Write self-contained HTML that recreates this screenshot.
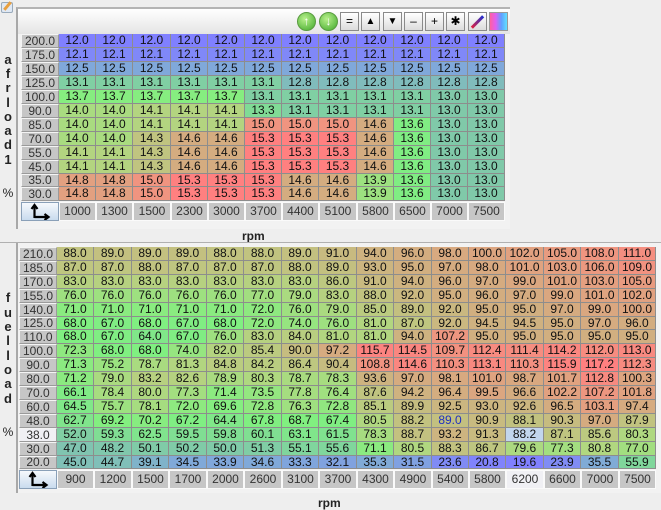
<!DOCTYPE html>
<html><head><meta charset="utf-8"><style>
body{margin:0;width:661px;height:509px;background:#eeeeee;position:relative;overflow:hidden;font-family:"Liberation Sans",sans-serif;}
.a{position:absolute;box-sizing:border-box;}
.c{position:absolute;box-sizing:border-box;font-size:12px;text-align:center;color:#111;border-right:1px solid #8d8d8d;border-bottom:1px solid #8d8d8d;white-space:nowrap;}
.h{position:absolute;box-sizing:border-box;font-size:12px;text-align:center;color:#333;background:#c6c6c6;border:1px solid #f4f4f4;border-right-color:#9a9a9a;border-bottom-color:#9a9a9a;}
.x{position:absolute;box-sizing:border-box;font-size:12px;text-align:center;color:#333;background:#c6c6c6;border:1px solid #fafafa;line-height:17px;}
.v{position:absolute;font-size:13px;font-weight:bold;color:#222;width:14px;text-align:center;}
.btn{position:absolute;top:12px;width:19px;height:19px;box-sizing:border-box;border:1px solid #8a8a8a;background:linear-gradient(#fff,#dcdcdc);font-size:12px;text-align:center;line-height:17px;color:#000;}
.corner{position:absolute;box-sizing:border-box;background:linear-gradient(#f6f9fc,#c9dbee);border:1px solid #8aa0b8;}
.lbl{position:absolute;font-size:12px;font-weight:bold;color:#222;}
</style></head><body>
<div class="a" style="left:1px;top:2px;width:12px;height:11px;background:#dfe8f4;border:1px solid #9ab;border-radius:2px"></div>
<div class="a" style="left:6px;top:1px;width:3px;height:10px;background:#e8a040;transform:rotate(40deg)"></div>

<div class="a" style="left:16px;top:7px;width:494px;height:222px;border-left:2px solid #a8a8a8;border-top:2px solid #b4b4b4;background:#f2f2f2"></div>
<div class="a" style="left:18px;top:9px;width:492px;height:25px;background:linear-gradient(#ffffff,#e4e4e4)"></div>
<div class="btn" style="left:297px;border-radius:50%;background:radial-gradient(circle at 40% 35%,#b8f08c,#3fa82a);border-color:#5a9a40;color:#fff;font-weight:bold">&#x2191;</div>
<div class="btn" style="left:319px;border-radius:50%;background:radial-gradient(circle at 40% 35%,#b8f08c,#3fa82a);border-color:#5a9a40;color:#fff;font-weight:bold">&#x2193;</div>
<div class="btn" style="left:340px">=</div>
<div class="btn" style="left:361px;font-size:10px">&#9650;</div>
<div class="btn" style="left:383px;font-size:10px">&#9660;</div>
<div class="btn" style="left:404px">&#8211;</div>
<div class="btn" style="left:425px">+</div>
<div class="btn" style="left:446px">&#10033;</div>
<div class="btn" style="left:468px"><div class="a" style="left:7px;top:1px;width:3px;height:16px;background:linear-gradient(#2030d0,#e02040);transform:rotate(45deg)"></div></div>
<div class="btn" style="left:489px;background:linear-gradient(90deg,#ff60a0,#e060f0,#60a0ff,#60e0ff);border-color:#999"></div>

<div class="v" style="left:1px;top:52px">a</div>
<div class="v" style="left:1px;top:66px">f</div>
<div class="v" style="left:1px;top:80px">r</div>
<div class="v" style="left:1px;top:95px">l</div>
<div class="v" style="left:1px;top:109px">o</div>
<div class="v" style="left:1px;top:123px">a</div>
<div class="v" style="left:1px;top:137px">d</div>
<div class="v" style="left:1px;top:152px">1</div>
<div class="v" style="left:1px;top:186px;font-weight:normal;font-size:12px">%</div>
<div class="lbl" style="left:242px;top:229px">rpm</div>

<div class="a" style="left:0;top:242px;width:661px;height:1px;background:#b0b0b0"></div>
<div class="a" style="left:16px;top:243px;width:645px;height:250px;border-left:2px solid #a8a8a8;background:#f2f2f2"></div>
<div class="v" style="left:1px;top:290px">f</div>
<div class="v" style="left:1px;top:305px">u</div>
<div class="v" style="left:1px;top:319px">e</div>
<div class="v" style="left:1px;top:333px">l</div>
<div class="v" style="left:1px;top:348px">l</div>
<div class="v" style="left:1px;top:362px">o</div>
<div class="v" style="left:1px;top:376px">a</div>
<div class="v" style="left:1px;top:391px">d</div>
<div class="v" style="left:1px;top:425px;font-weight:normal;font-size:12px">%</div>
<div class="lbl" style="left:318px;top:496px">rpm</div>

<div id="g"></div>
<script>
var stops=[[0,128,128,255],[0.15,128,168,218],[0.3,128,200,170],[0.5,128,240,128],[0.63,178,214,128],[0.77,208,176,128],[0.9,238,150,128],[1,255,128,128]];
function col(t){t=Math.max(0,Math.min(1,t));for(var i=1;i<stops.length;i++){if(t<=stops[i][0]){var a=stops[i-1],b=stops[i],f=(t-a[0])/(b[0]-a[0]);return 'rgb('+[1,2,3].map(function(k){return Math.round(a[k]+(b[k]-a[k])*f)}).join(',')+')';}}return 'rgb(255,128,128)';}
var out='';
var R=Math.round;
function grid(o){
 var nr=o.rows.length;
 for(var r=0;r<nr;r++){
  var y=R(o.top+r*o.rh), y2=R(o.top+(r+1)*o.rh);
  var hs=(o.hiRow===r)?'background:#f0f0f4;':'';
  out+='<div class="h" style="'+hs+'left:'+o.hx+'px;top:'+y+'px;width:'+o.hw+'px;height:'+(y2-y)+'px;line-height:'+(y2-y-2)+'px">'+o.rows[r].toFixed(1)+'</div>';
  var vals=o.data[r];
  for(var c=0;c<vals.length;c++){
   var x=R(o.cx+c*o.cw),x2=R(o.cx+(c+1)*o.cw);
   var v=vals[c];var bg=col((v-o.min)/(o.max-o.min));var extra='';
   if(o.sel&&o.sel[0]==r&&o.sel[1]==c){bg='#c2d6ee';}
   if(o.blue&&o.blue[0]==r&&o.blue[1]==c){extra='color:#2030c0;';}
   out+='<div class="c" style="'+extra+'background:'+bg+';left:'+x+'px;top:'+y+'px;width:'+(x2-x)+'px;height:'+(y2-y)+'px;line-height:'+(y2-y-1)+'px">'+v.toFixed(1)+'</div>';
  }
 }
 var ay=R(o.top+nr*o.rh)+1;
 out+='<div class="corner" style="left:'+o.hx+'px;top:'+ay+'px;width:'+o.hw+'px;height:19px"><svg width="'+(o.hw-2)+'" height="17" viewBox="0 0 35 17"><path d="M12 15V3M9 6l3-4 3 4M12 14h13M22 11l4 3-4 3" stroke="#000" stroke-width="2.2" fill="none"/></svg></div>';
 for(var c=0;c<o.xs.length;c++){
  var x=R(o.cx+c*o.cw),x2=R(o.cx+(c+1)*o.cw);var s=(o.hiCol===c)?'background:#f0f0f4;':'';
  out+='<div class="x" style="'+s+'left:'+x+'px;top:'+ay+'px;width:'+(x2-x)+'px;height:19px">'+o.xs[c]+'</div>';
 }
}
function rep(v,n){var a=[];for(var i=0;i<n;i++)a.push(v);return a;}
var d1=[rep(12.0,12),rep(12.1,12),rep(12.5,12),rep(13.1,6).concat(rep(12.8,6)),
rep(13.7,5).concat(rep(13.1,5),[13.0,13.0]),
[14.0,14.0,14.1,14.1,14.1,13.3,13.1,13.1,13.1,13.1,13.0,13.0],
[14.0,14.0,14.1,14.1,14.1,15.0,15.0,15.0,14.6,13.6,13.0,13.0],
[14.0,14.0,14.3,14.6,14.6,15.3,15.3,15.3,14.6,13.6,13.0,13.0],
[14.1,14.1,14.3,14.6,14.6,15.3,15.3,15.3,14.6,13.6,13.0,13.0],
[14.1,14.1,14.3,14.6,14.6,15.3,15.3,15.3,14.6,13.6,13.0,13.0],
[14.8,14.8,15.0,15.3,15.3,15.3,14.6,14.6,13.9,13.6,13.0,13.0],
[14.8,14.8,15.0,15.3,15.3,15.3,14.6,14.6,13.9,13.6,13.0,13.0]];
grid({rows:[200,175,150,125,100,90,85,70,55,45,35,30],data:d1,xs:[1000,1300,1500,2300,3000,3700,4400,5100,5800,6500,7000,7500],hx:21,hw:38,cx:59,cw:37.2,top:34,rh:13.95,min:12.0,max:15.3});
var d2=[
[88.0,89.0,89.0,89.0,88.0,88.0,89.0,91.0,94.0,96.0,98.0,100.0,102.0,105.0,108.0,111.0],
[87.0,87.0,88.0,87.0,87.0,87.0,88.0,89.0,93.0,95.0,97.0,98.0,101.0,103.0,106.0,109.0],
[83.0,83.0,83.0,83.0,83.0,83.0,83.0,86.0,91.0,94.0,96.0,97.0,99.0,101.0,103.0,105.0],
[76.0,76.0,76.0,76.0,76.0,77.0,79.0,83.0,88.0,92.0,95.0,96.0,97.0,99.0,101.0,102.0],
[71.0,71.0,71.0,71.0,71.0,72.0,76.0,79.0,85.0,89.0,92.0,95.0,95.0,97.0,99.0,100.0],
[68.0,67.0,68.0,67.0,68.0,72.0,74.0,76.0,81.0,87.0,92.0,94.5,94.5,95.0,97.0,96.0],
[68.0,67.0,64.0,67.0,76.0,83.0,84.0,81.0,81.0,94.0,107.2,95.0,95.0,95.0,95.0,95.0],
[72.3,68.0,68.0,74.0,82.0,85.4,90.0,97.2,115.7,114.5,109.7,112.4,111.4,114.2,112.0,113.0],
[71.3,75.2,78.7,81.3,84.8,84.2,86.4,90.4,108.8,114.6,110.3,113.1,110.3,115.9,117.2,112.3],
[71.2,79.0,83.2,82.6,78.9,80.3,78.7,78.3,93.6,97.0,98.1,101.0,98.7,101.7,112.8,100.3],
[66.1,78.4,80.0,77.3,71.4,73.5,77.8,76.4,87.6,94.2,96.4,99.5,96.6,102.2,107.2,101.8],
[64.5,75.7,78.1,72.0,69.6,72.8,76.3,72.8,85.1,89.9,92.5,93.0,92.6,96.5,103.1,97.4],
[62.7,69.2,70.2,67.2,64.4,67.8,68.7,67.4,80.5,88.2,89.0,90.9,88.1,90.3,97.0,87.9],
[52.0,59.3,62.5,59.5,59.8,60.1,63.1,61.5,78.3,88.7,93.2,91.3,88.2,87.1,85.6,80.3],
[47.0,48.2,50.1,50.2,50.0,51.3,55.1,55.6,71.1,80.5,88.3,86.7,79.6,77.3,80.8,77.0],
[45.0,44.7,39.1,34.5,33.9,34.6,33.3,32.1,35.3,31.5,23.6,20.8,19.6,23.9,35.5,55.9]];
grid({rows:[210,185,170,155,140,125,110,100,90,80,70,60,48,38,30,20],data:d2,xs:[900,1200,1500,1700,2000,2600,3100,3700,4300,4900,5400,5800,6200,6600,7000,7500],hx:19,hw:38,cx:57,cw:37.45,top:247,rh:13.9,min:19.6,max:117.2,sel:[13,12],blue:[12,10],hiRow:13,hiCol:12});
document.getElementById('g').innerHTML=out;
</script>
</body></html>
